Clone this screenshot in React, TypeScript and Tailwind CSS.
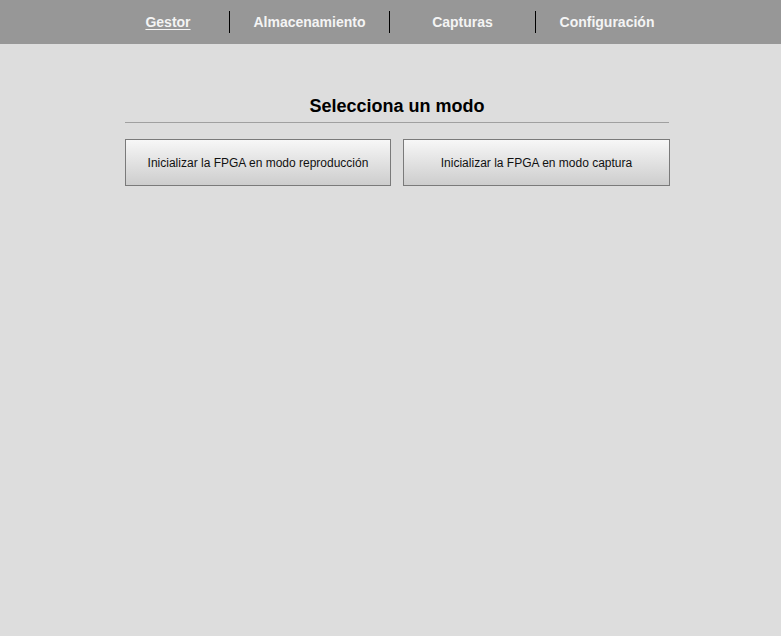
const navItems = [
  { label: 'Gestor', width: 'w-[122px]', active: true },
  { label: 'Almacenamiento', width: 'w-[159px]' },
  { label: 'Capturas', width: 'w-[145px]' },
  { label: 'Configuración', width: 'w-[142px]' },
]

export default function App() {
  return (
    <div className="min-h-[636px] bg-[#dddddd] font-['Liberation_Sans',Arial,sans-serif] text-black">
      <nav className="flex h-[44px] items-center bg-[#979797] pl-[107px]">
        {navItems.map((item, i) => (
          <div key={item.label} className="flex items-center">
            {i > 0 && <span className="h-[22px] w-px bg-black" />}
            <a
              href="#"
              className={`${item.width} pt-px text-center text-[14px] font-bold text-[#f4f4f4] ${
                item.active ? 'underline underline-offset-2' : 'no-underline'
              }`}
            >
              {item.label}
            </a>
          </div>
        ))}
      </nav>

      <main className="ml-[125px] w-[545px] pt-[51px]">
        <h1 className="mr-px border-b border-[#a0a0a0] pb-[5px] text-center text-[18px] leading-[22px] font-bold">
          Selecciona un modo
        </h1>
        <div className="mt-[16px] flex gap-[12px]">
          <button
            type="button"
            className="h-[47px] w-[266px] border border-[#7a7a7a] bg-gradient-to-b from-[#f7f7f7] to-[#cdcdcd] text-[12px] text-[#111]"
          >
            Inicializar la FPGA en modo reproducción
          </button>
          <button
            type="button"
            className="h-[47px] w-[267px] border border-[#7a7a7a] bg-gradient-to-b from-[#f7f7f7] to-[#cdcdcd] text-[12px] text-[#111]"
          >
            Inicializar la FPGA en modo captura
          </button>
        </div>
      </main>
    </div>
  )
}
